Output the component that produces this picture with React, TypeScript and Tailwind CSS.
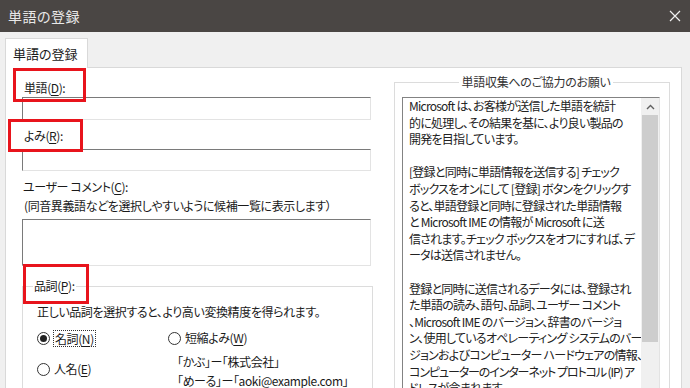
import React from 'react';

const FONT = "font-['Noto_Sans_CJK_JP','Noto_Sans',sans-serif] [font-feature-settings:'palt']";

const infoLines = [
  'Microsoft は、お客様が送信した単語を統計',
  '的に処理し、その結果を基に、より良い製品の',
  '開発を目指しています。',
  '',
  '[登録と同時に単語情報を送信する] チェック',
  'ボックスをオンにして [登録] ボタンをクリックす',
  'ると、単語登録と同時に登録された単語情報',
  'と Microsoft IME の情報が Microsoft に送',
  '信されます。チェック ボックスをオフにすれば、デ',
  'ータは送信されません。',
  '',
  '登録と同時に送信されるデータには、登録され',
  'た単語の読み、語句、品詞、ユーザー コメント',
  '、Microsoft IME のバージョン、辞書のバージョ',
  'ン、使用しているオペレーティング システムのバー',
  'ジョンおよびコンピューター ハードウェアの情報、',
  'コンピューターのインターネット プロトコル (IP) ア',
  'ドレスが含まれます。',
];

function Mn({ children }: { children: React.ReactNode }) {
  return <span className="underline underline-offset-2">{children}</span>;
}

function Radio({ checked }: { checked?: boolean }) {
  return (
    <span className="w-[13px] h-[13px] rounded-full border border-[#333] bg-white flex items-center justify-center shrink-0">
      {checked && <span className="w-[7px] h-[7px] rounded-full bg-[#222]" />}
    </span>
  );
}

function TextBox({ h }: { h: string }) {
  return (
    <div className={`${h} w-[349px] bg-white border border-[#e3e3e3] border-t-[#7a7a7a] border-l-[#7a7a7a]`} />
  );
}

export default function App() {
  return (
    <div className={`w-[690px] h-[388px] overflow-hidden bg-[#f0f0f0] text-[#1a1a1a] ${FONT}`}>
      {/* title bar */}
      <div className="h-[32px] bg-[#4a4644] flex items-center justify-between pl-[8px] pr-[8px]">
        <span className="text-[14px] text-[#e8e8e8] tracking-[0.5px]">単語の登録</span>
        <svg width="12" height="12" viewBox="0 0 12 12" className="mr-[1px]">
          <path d="M1 1 L11 11 M11 1 L1 11" stroke="#f0f0f0" strokeWidth="1.2" />
        </svg>
      </div>

      <div className="pl-[5px] pr-[8px] pt-[6px]">
        {/* tabs */}
        <div className="flex">
          <div className="w-[83px] h-[30px] bg-white border border-b-0 border-[#d9d9d9] flex items-center pl-[7px] text-[13px] -mb-[1px] relative z-10">
            単語の登録
          </div>
        </div>

        {/* tab panel */}
        <div className="bg-white border border-[#d9d9d9] h-[330px] flex pl-[16px] pr-[11px]">
          {/* left column */}
          <div className="w-[352px] flex flex-col text-[12px] tracking-[-0.4px] leading-[16px]">
            <div className="relative mt-[12px] pl-[2px]">
              <span>
                単語(<Mn>D</Mn>):
              </span>
              <div className="absolute left-[-9px] top-[-12px] w-[73px] h-[34px] border-[3px] border-[#e8141c]" />
            </div>
            <div className="mt-[1px]">
              <TextBox h="h-[23px]" />
            </div>

            <div className="relative mt-[8px] pl-[2px]">
              <span>
                よみ(<Mn>R</Mn>):
              </span>
              <div className="absolute left-[-14px] top-[-9px] w-[75px] h-[33px] border-[3px] border-[#e8141c]" />
            </div>
            <div className="mt-[5px]">
              <TextBox h="h-[22px]" />
            </div>

            <div className="mt-[8px] pl-[1px]">
              ユーザー コメント(<Mn>C</Mn>):
            </div>
            <div className="mt-[3px] pl-[2px]">(同音異義語などを選択しやすいように候補一覧に表示します）</div>
            <div className="mt-[5px]">
              <TextBox h="h-[47px]" />
            </div>

            {/* part of speech group */}
            <div className="relative mt-[20px] w-[351px] h-[120px] border border-[#dcdcdc] border-b-0">
              <div className="absolute left-[10px] top-[-9px] bg-white px-[1px]">
                品詞(<Mn>P</Mn>):
              </div>
              <div className="absolute left-[0px] top-[-23px] w-[66px] h-[40px] border-[3px] border-[#e8141c]" />
              <div className="pl-[14px] pt-[17px]">正しい品詞を選択すると、より高い変換精度を得られます。</div>
              <div className="flex pl-[14px] mt-[10px]">
                <div className="w-[131px] flex flex-col gap-[14px]">
                  <div className="flex items-center gap-[3px]">
                    <Radio checked />
                    <span className="border border-dotted border-[#333] px-[1px] leading-[15px]">
                      名詞(<Mn>N</Mn>)
                    </span>
                  </div>
                  <div className="flex items-center gap-[4px]">
                    <Radio />
                    <span>
                      人名(<Mn>E</Mn>)
                    </span>
                  </div>
                </div>
                <div className="flex flex-col">
                  <div className="flex items-center gap-[4px]">
                    <Radio />
                    <span>
                      短縮よみ(<Mn>W</Mn>)
                    </span>
                  </div>
                  <div className="pl-[9px] mt-[6px] leading-[19px]">
                    <div>「かぶ」ー「株式会社」</div>
                    <div>「めーる」ー「aoki@example.com」</div>
                  </div>
                </div>
              </div>
            </div>
          </div>

          {/* right column: info group */}
          <div className="relative ml-[21px] mt-[14px] w-[276px] border border-[#dcdcdc] border-b-0 pl-[7px] pr-[9px] pt-[14px]">
            <div className="absolute left-0 right-0 top-[-9px] flex justify-center pl-[8px]">
              <span className="bg-white px-[3px] text-[12px] tracking-[-0.3px] leading-[16px] text-[#333]">単語収集へのご協力のお願い</span>
            </div>
            <div className="h-[300px] border border-[#e3e3e3] border-t-[#838383] border-l-[#838383] flex">
              <div className="flex-1 pl-[6px] text-[12px] tracking-[-0.75px] leading-[16.6px] text-[#222] whitespace-nowrap overflow-hidden">
                {infoLines.map((l, i) => (
                  <div key={i} className={i === 16 ? 'h-[16.6px] tracking-[-1.1px]' : 'h-[16.6px]'}>
                    {l}
                  </div>
                ))}
              </div>
              <div className="w-[18px] bg-[#f0f0f0] flex flex-col items-center">
                <div className="h-[17px] flex items-center justify-center">
                  <svg width="9" height="6" viewBox="0 0 9 6">
                    <path d="M1 5 L4.5 1.5 L8 5" stroke="#606060" strokeWidth="1.4" fill="none" />
                  </svg>
                </div>
                <div className="w-[16px] h-[227px] bg-[#cdcdcd]" />
              </div>
            </div>
          </div>
        </div>
      </div>
    </div>
  );
}
